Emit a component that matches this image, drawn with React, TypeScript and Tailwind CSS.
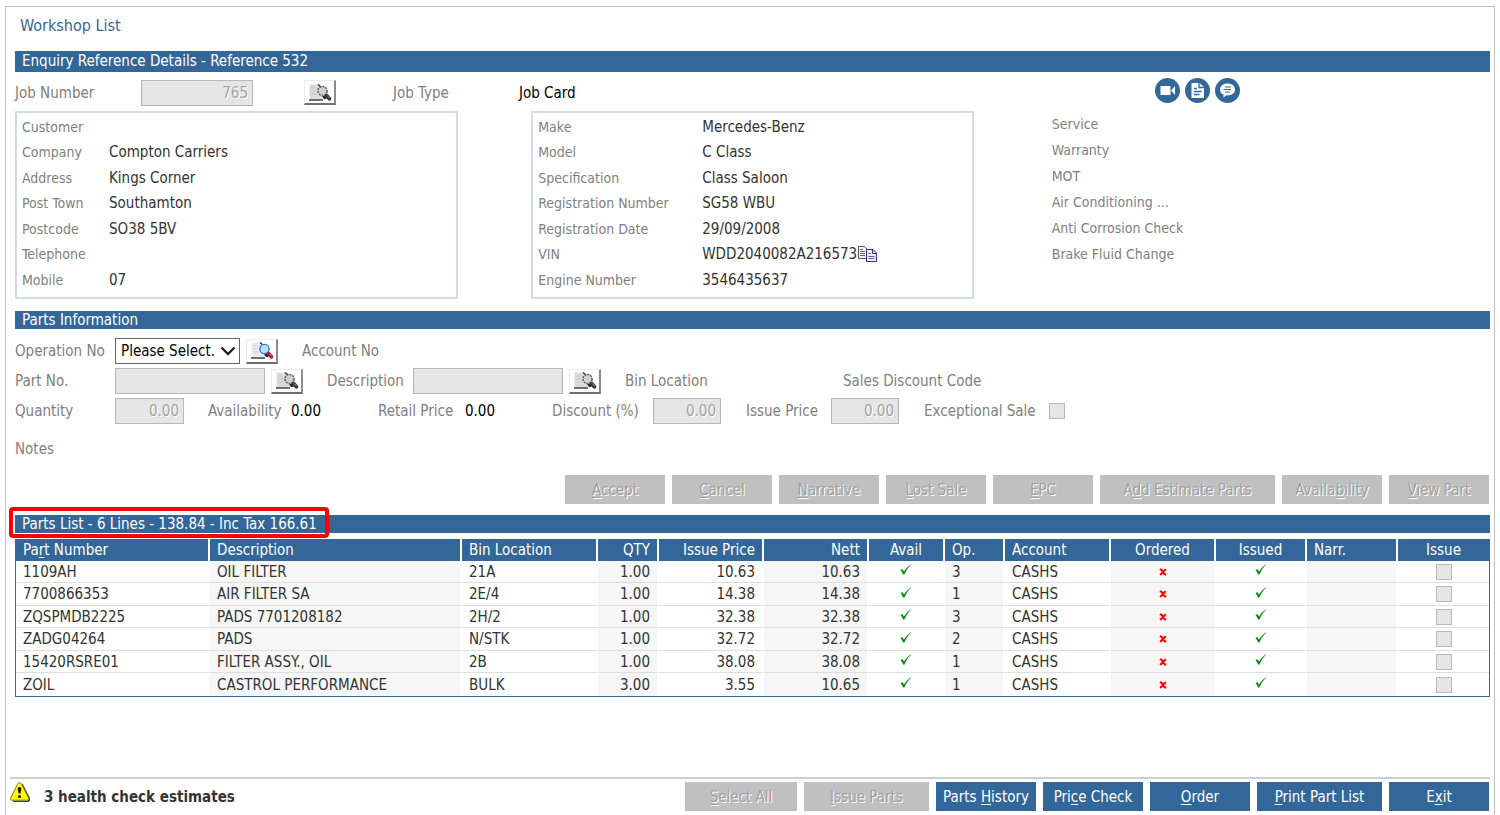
import type { ReactNode } from "react";
import clsx from "clsx";

type Align = "left" | "right" | "center";

const customer = [
  ["Customer", ""],
  ["Company", "Compton Carriers"],
  ["Address", "Kings Corner"],
  ["Post Town", "Southamton"],
  ["Postcode", "SO38 5BV"],
  ["Telephone", ""],
  ["Mobile", "07"],
];

const vehicle = [
  ["Make", "Mercedes-Benz"],
  ["Model", "C Class"],
  ["Specification", "Class Saloon"],
  ["Registration Number", "SG58 WBU"],
  ["Registration Date", "29/09/2008"],
  ["VIN", "WDD2040082A216573"],
  ["Engine Number", "3546435637"],
];

const reminders = ["Service", "Warranty", "MOT", "Air Conditioning ...", "Anti Corrosion Check", "Brake Fluid Change"];

const columns: { title: ReactNode; width: string; align: Align }[] = [
  { title: <>Pa<u>r</u>t Number</>, width: "w-[194px]", align: "left" },
  { title: "Description", width: "w-[252px]", align: "left" },
  { title: "Bin Location", width: "w-[136px]", align: "left" },
  { title: "QTY", width: "w-[61px]", align: "right" },
  { title: "Issue Price", width: "w-[105px]", align: "right" },
  { title: "Nett", width: "w-[105px]", align: "right" },
  { title: "Avail", width: "w-[76px]", align: "center" },
  { title: "Op.", width: "w-[60px]", align: "left" },
  { title: "Account", width: "w-[106px]", align: "left" },
  { title: "Ordered", width: "w-[105px]", align: "center" },
  { title: "Issued", width: "w-[91px]", align: "center" },
  { title: "Narr.", width: "w-[91px]", align: "left" },
  { title: "Issue", width: "w-[91px]", align: "center" },
];

const parts = [
  ["1109AH", "OIL FILTER", "21A", "1.00", "10.63", "10.63", "3"],
  ["7700866353", "AIR FILTER SA", "2E/4", "1.00", "14.38", "14.38", "1"],
  ["ZQSPMDB2225", "PADS 7701208182", "2H/2", "1.00", "32.38", "32.38", "3"],
  ["ZADG04264", "PADS", "N/STK", "1.00", "32.72", "32.72", "2"],
  ["15420RSRE01", "FILTER ASSY., OIL", "2B", "1.00", "38.08", "38.08", "1"],
  ["ZOIL", "CASTROL PERFORMANCE", "BULK", "3.00", "3.55", "10.65", "1"],
];

const alignClass = {
  left: "text-left",
  right: "text-right",
  center: "text-center",
};

function Tick() {
  return (
    <svg className="mx-auto mb-1 block" width="12" height="11" viewBox="0 0 12 11" role="img" aria-label="Yes">
      <path d="M0.5 6.2 L2.2 5 L4 7.6 C5.8 4.4 8 2 11.2 0.2 L11.4 0.6 C8.4 3 6.2 6.2 4.4 10.6 L3 10.6 C2.5 8.8 1.6 7.2 0.5 6.2Z" fill="#0a8a12" />
    </svg>
  );
}

function Cross() {
  return (
    <svg className="mx-auto block" width="8" height="8" viewBox="0 0 8 8" role="img" aria-label="No">
      <path d="M0.8 1.2 L2.6 1.8 L5.4 6.2 L7.2 6.8 M6.8 1.2 L4.2 3.8 L1.2 7" stroke="#f00" strokeWidth="2" fill="none" />
    </svg>
  );
}

function CopyIcon() {
  return (
    <svg width="20" height="17" viewBox="0 0 20 17" aria-hidden="true">
      <path d="M0.5 0.5 H6.5 L9.5 3.5 V12.5 H0.5Z" fill="#f4f4f4" stroke="#555" />
      <path d="M2 3.5 H5 M2 5.5 H7 M2 7.5 H7 M2 9.5 H7" stroke="#666" />
      <path d="M8.5 3.5 H15 L18.5 7 V15.5 H8.5Z" fill="#f0f0fa" stroke="#2b2bb5" />
      <path d="M14.5 3.5 V7.5 H18.5" fill="none" stroke="#2b2bb5" />
      <path d="M10.5 7.5 H13 M10.5 10.5 H16.5 M10.5 12.5 H16.5" stroke="#666" />
    </svg>
  );
}

function LookupButton({ label, disabled }: { label: string; disabled?: boolean }) {
  return (
    <button
      type="button"
      aria-label={label}
      disabled={disabled}
      className="flex h-[25px] w-8 shrink-0 items-center justify-center border-t border-l border-r-2 border-b-2 border-t-[#ececec] border-l-[#ececec] border-r-[#8c8c8c] border-b-[#6e6e6e] bg-white"
    >
      <svg width="24" height="19" viewBox="0 0 24 19" aria-hidden="true">
        <path d="M1.5 1.5 H10.5 L14 5 V16.5 H1.5Z" fill={disabled ? "#dcdcdc" : "#e9ecf3"} />
        <path d="M1 17 H15" stroke="#333" strokeWidth="1.4" />
        <path d="M3 5 H8 M3 8 H8 M3 11 H9" stroke={disabled ? "#c6c6c6" : "#cfd4df"} />
        <path d="M10 1.5 L14 5" stroke="#333" strokeWidth="1.4" />
        <circle cx="14.5" cy="8" r="4.6" fill={disabled ? "#cfcfcf" : "#b5e4fb"} stroke={disabled ? "#555" : "#3c78c4"} strokeWidth="1.4" strokeDasharray={disabled ? "2 1" : undefined} />
        <path d="M14 13.5 L18 12 L18.5 16 L16 16Z" fill="#2a2a3a" />
        <path d="M18.6 12.6 L21.4 15.8" stroke={disabled ? "#3a3a3a" : "#a32438"} strokeWidth="3.8" strokeLinecap="round" />
        <path d="M19.4 12.6 L21.4 14.8" stroke={disabled ? "#999" : "#e0808c"} strokeWidth="1" />
      </svg>
    </button>
  );
}

function DisabledInput({ id, value = "", className }: { id: string; value?: string; className: string }) {
  return (
    <input
      id={id}
      type="text"
      disabled
      value={value}
      readOnly
      className={clsx(
        "h-[26px] shrink-0 border border-[#b8b8b8] bg-[#e5e5e5] px-1 text-right text-[#a3a3a3] [text-shadow:1px_1px_0_#fff]",
        className
      )}
    />
  );
}

function RoundButton({ label, children }: { label: string; children: ReactNode }) {
  return (
    <button type="button" aria-label={label} className="size-[25px] rounded-full bg-[#336699]">
      <svg width="25" height="25" viewBox="0 0 25 25" aria-hidden="true">
        {children}
      </svg>
    </button>
  );
}

function ActionButton({ children, disabled, width = "w-[100px]" }: { children: ReactNode; disabled?: boolean; width?: string }) {
  return (
    <button
      type="button"
      disabled={disabled}
      className={clsx(
        "h-[29px] whitespace-nowrap",
        width,
        disabled ? "bg-[#c0c0c0] text-[#a0a0a0] [text-shadow:1px_1px_0_#fff]" : "bg-[#336699] text-white"
      )}
    >
      {children}
    </button>
  );
}

function DetailPanel({ rows, labelWidth, className }: { rows: string[][]; labelWidth: string; className?: string }) {
  return (
    <dl className={clsx("w-[30%] border-2 border-[#d5dce8] px-[5px] pt-px pb-[5px]", className)}>
      {rows.map(([label, value]) => (
        <div key={label} className="flex items-center odd:h-[25px] even:h-[26px]">
          <dt className={clsx("shrink-0 text-[14px] text-[#808080]", labelWidth)}>{label}</dt>
          <dd className="text-[#333]">{value}</dd>
          {label === "VIN" && (
            <button type="button" aria-label="Copy VIN" className="ml-px">
              <CopyIcon />
            </button>
          )}
        </div>
      ))}
    </dl>
  );
}

export default function App() {
  return (
    <div className="flex min-h-screen flex-col bg-white px-[5px] pt-1.5 font-['DejaVu_Sans_Condensed','DejaVu_Sans',sans-serif] text-[15px] leading-[18px] text-[#808080] [&_u]:underline-offset-2">
      <main className="flex flex-1 flex-col border-x border-t border-[#c0c0c0] pr-1 pl-[9px]">
        <h1 className="py-[9px] pl-[5px] text-[16px] leading-5 text-[#336699]">Workshop List</h1>

        <h2 className="mt-[6px] h-[21px] bg-[#336699] pl-[7px] leading-5 text-white">
          Enquiry Reference Details - Reference 532
        </h2>
        <div className="flex h-[39px] items-center pb-[2px]">
          <div className="flex w-[77.3%] items-center pt-1">
            <label htmlFor="job-number" className="w-[126px]">Job Number</label>
            <DisabledInput id="job-number" value="765" className="w-28" />
            <div className="ml-[51px]">
              <LookupButton label="Find job" disabled />
            </div>
            <span className="ml-[57px] w-[126px]">Job Type</span>
            <span className="text-black">Job Card</span>
          </div>
          <div className="flex gap-[5px]">
            <RoundButton label="Video">
              <path d="M5.5 8 H15.5 V17 H5.5Z M16 12.5 L20 8 V17Z" fill="#fff" />
            </RoundButton>
            <RoundButton label="Document">
              <path d="M6.5 5 H14.5 L19 9 V20 H6.5Z" fill="#fff" />
              <path d="M14 5 V9.5 H19 M9 10.5 H12 M9 13.5 H16.5 M9 16.5 H14.5" fill="none" stroke="#336699" strokeWidth="1.3" />
            </RoundButton>
            <RoundButton label="Message">
              <path d="M12.5 5.5 C17 5.5 20 8.2 20 11.5 C20 15 17 17.4 12.5 17.4 L11 17.3 L8.5 19.8 V16.6 C6.2 15.5 5 13.7 5 11.5 C5 8.2 8 5.5 12.5 5.5Z" fill="#fff" />
              <path d="M10 9 H16 M8.5 11.5 H16 M10 14 H15" stroke="#336699" strokeWidth="1.2" />
            </RoundButton>
          </div>
        </div>

        <section className="flex">
          <DetailPanel rows={customer} labelWidth="w-[87px]" />
          <DetailPanel rows={vehicle} labelWidth="w-[164px]" className="ml-[5%]" />
          <ul className="ml-[78px] flex-1 text-[14px]">
            {reminders.map((item) => (
              <li key={item} className="flex h-[26px] items-center">{item}</li>
            ))}
          </ul>
        </section>

        <h2 className="mt-3 h-[18px] bg-[#336699] pl-[7px] text-white">Parts Information</h2>
        <div className="mt-[7px] flex h-[30px] items-center">
          <label htmlFor="operation" className="w-[100px]">Operation No</label>
          <div className="relative">
            <select id="operation" className="block h-[26px] w-[125px] appearance-none border border-[#666] bg-white pr-6 pl-[5px] text-black">
              <option>Please Select...</option>
            </select>
            <svg className="pointer-events-none absolute top-2 right-1" width="16" height="10" viewBox="0 0 16 10" aria-hidden="true">
              <path d="M1.5 1.5 L8 8 L14.5 1.5" fill="none" stroke="#222" strokeWidth="2.4" />
            </svg>
          </div>
          <div className="ml-[6px]">
            <LookupButton label="Find operation" />
          </div>
          <span className="ml-6">Account No</span>
        </div>
        <div className="flex h-[30px] items-center">
          <label htmlFor="part-no" className="w-[100px]">Part No.</label>
          <DisabledInput id="part-no" className="w-[150px]" />
          <div className="ml-[6px]">
            <LookupButton label="Find part" disabled />
          </div>
          <label htmlFor="description" className="ml-6 w-[86px]">Description</label>
          <DisabledInput id="description" className="w-[150px]" />
          <div className="ml-[6px]">
            <LookupButton label="Find description" disabled />
          </div>
          <span className="ml-6 w-[218px]">Bin Location</span>
          <span>Sales Discount Code</span>
        </div>
        <div className="flex h-[30px] items-center">
          <label htmlFor="quantity" className="w-[100px]">Quantity</label>
          <DisabledInput id="quantity" value="0.00" className="w-[69px]" />
          <span className="ml-6 w-[83px]">Availability</span>
          <span className="w-[87px] text-black">0.00</span>
          <span className="w-[87px]">Retail Price</span>
          <span className="w-[87px] text-black">0.00</span>
          <label htmlFor="discount" className="w-[101px]">Discount (%)</label>
          <DisabledInput id="discount" value="0.00" className="w-[68px]" />
          <label htmlFor="issue-price" className="ml-[25px] w-[85px]">Issue Price</label>
          <DisabledInput id="issue-price" value="0.00" className="w-[68px]" />
          <label htmlFor="exceptional" className="ml-[25px] w-[125px]">Exceptional Sale</label>
          <input id="exceptional" type="checkbox" disabled className="size-4 appearance-none border border-[#b8b8b8] bg-[#e5e5e5]" />
        </div>
        <p className="mt-[14px]">Notes</p>

        <div className="mt-[17px] flex justify-end gap-[7px] pr-px">
          <ActionButton disabled><u>A</u>ccept</ActionButton>
          <ActionButton disabled><u>C</u>ancel</ActionButton>
          <ActionButton disabled><u>N</u>arrative</ActionButton>
          <ActionButton disabled><u>L</u>ost Sale</ActionButton>
          <ActionButton disabled><u>E</u>PC</ActionButton>
          <ActionButton disabled width="w-[175px]">A<u>d</u>d Estimate Parts</ActionButton>
          <ActionButton disabled>Availa<u>b</u>ility</ActionButton>
          <ActionButton disabled><u>V</u>iew Part</ActionButton>
        </div>

        <h2 className="relative mt-[11px] h-[18px] bg-[#336699] pl-[7px] text-white">
          Parts List - 6 Lines - 138.84 - Inc Tax 166.61
          <span className="absolute -top-2 -left-[6px] h-[31px] w-80 rounded-sm border-4 border-[#f00]" />
        </h2>
        <table className="mt-[6px] w-full table-fixed border-separate border-spacing-0 border-x border-b border-[#336699] text-[#333]">
          <thead>
            <tr className="h-[22px] bg-[#336699] text-white">
              {columns.map((col, i) => (
                <th
                  key={i}
                  scope="col"
                  className={clsx("border-r-2 border-white p-0 px-[7px] font-normal last:border-r-0", col.width, alignClass[col.align])}
                >
                  {col.title}
                </th>
              ))}
            </tr>
          </thead>
          <tbody>
            {parts.map((part) => {
              const cells: ReactNode[] = [
                ...part,
                "CASHS",
                <Cross />,
                <Tick />,
                "",
                <input
                  type="checkbox"
                  disabled
                  aria-label={`Issue ${part[0]}`}
                  className="mx-auto block size-4 appearance-none border border-[#b8b8b8] bg-[#e5e5e5]"
                />,
              ];
              cells.splice(6, 0, <Tick />);
              return (
                <tr key={part[0]} className="group odd:h-[22px] even:h-[23px]">
                  {cells.map((cell, i) => (
                    <td
                      key={i}
                      className={clsx(
                        "border-r-2 border-b border-r-white border-b-[#dedede] p-0 px-[7px] whitespace-nowrap last:border-r-0 even:bg-[#f6f6f6] group-last:border-b-0",
                        alignClass[columns[i].align]
                      )}
                    >
                      {cell}
                    </td>
                  ))}
                </tr>
              );
            })}
          </tbody>
        </table>

        <footer className="mt-auto -ml-[5px] flex items-start border-t-2 border-[#cfcfcf] pt-[3px] pr-px pb-1">
          <svg width="20" height="20" viewBox="0 0 20 20" aria-hidden="true">
            <path d="M3 19.5 H18 L19.8 17.5 L12 2" fill="none" stroke="#444" strokeWidth="1.6" />
            <path d="M9.5 0.8 C10.6 0.8 11.2 1.4 11.7 2.4 L18.6 16 C19 17.4 18.4 18.2 17.2 18.2 H1.9 C0.6 18.2 0.2 17.4 0.7 16 L7.4 2.4 C7.9 1.4 8.5 0.8 9.5 0.8Z" fill="#ff0" stroke="#77770a" />
            <path d="M9.5 5 C11 5 11.4 6 11.2 7.4 L10.4 11.6 H8.6 L7.8 7.4 C7.6 6 8 5 9.5 5Z" fill="#111" />
            <circle cx="9.5" cy="14.4" r="1.5" fill="#111" />
          </svg>
          <strong className="mt-[6px] ml-[14px] font-bold text-[#333]">3 health check estimates</strong>
          <div className="ml-auto flex gap-[7px]">
            <ActionButton disabled width="w-28"><u>S</u>elect All</ActionButton>
            <ActionButton disabled width="w-[125px]"><u>I</u>ssue Parts</ActionButton>
            <ActionButton>Parts <u>H</u>istory</ActionButton>
            <ActionButton>Pri<u>c</u>e Check</ActionButton>
            <ActionButton><u>O</u>rder</ActionButton>
            <ActionButton width="w-[125px]"><u>P</u>rint Part List</ActionButton>
            <ActionButton>E<u>x</u>it</ActionButton>
          </div>
        </footer>
      </main>
    </div>
  );
}
